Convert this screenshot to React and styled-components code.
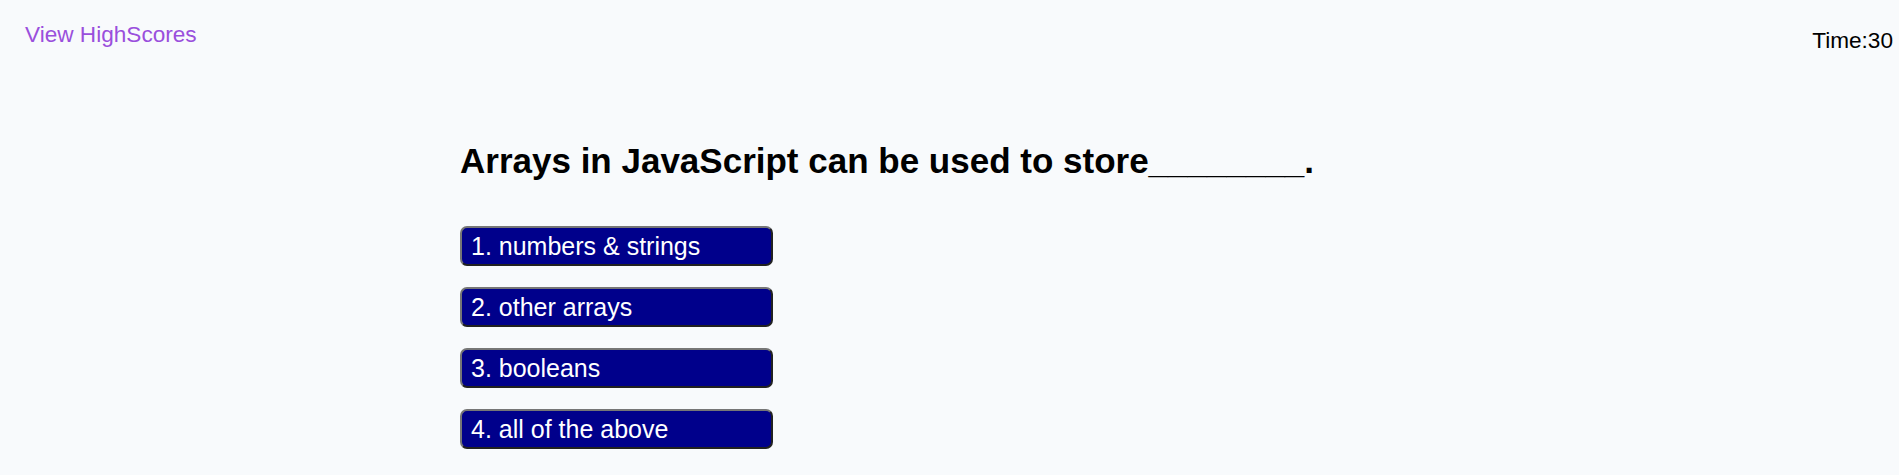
import styled, { createGlobalStyle } from "styled-components";

const GlobalStyle = createGlobalStyle`
    body {
        margin: 0;
        background-color: #f8fafc;
        font-family: "Liberation Sans", Arial, sans-serif;
    }
`;

const choices = [
    "1. numbers & strings",
    "2. other arrays",
    "3. booleans",
    "4. all of the above",
];

const App = () => {
    return (
        <>
            <GlobalStyle />
            <Header>
                <HighScoresLink href="#">View HighScores</HighScoresLink>
                <Timer>Time:30</Timer>
            </Header>
            <Quiz>
                <Question>Arrays in JavaScript can be used to store________.</Question>
                <Choices>
                    {choices.map((choice) => (
                        <ChoiceButton key={choice}>{choice}</ChoiceButton>
                    ))}
                </Choices>
            </Quiz>
        </>
    );
};

const Header = styled.header`
    display: flex;
    justify-content: space-between;
    align-items: flex-start;
    padding: 0 6px 0 25px;
`;

const HighScoresLink = styled.a`
    margin-top: 22px;
    font-size: 22.6px;
    color: #9a4fdc;
    text-decoration: none;
`;

const Timer = styled.div`
    margin-top: 28px;
    font-size: 22.6px;
    color: #000;
`;

const Quiz = styled.main`
    padding-left: 460px;
    margin-top: 87px;
`;

const Question = styled.h1`
    margin: 0 0 45px;
    font-size: 35px;
    font-weight: bold;
    color: #000;
`;

const Choices = styled.div`
    display: flex;
    flex-direction: column;
    align-items: flex-start;
    gap: 21px;
`;

const ChoiceButton = styled.button`
    width: 313px;
    height: 40px;
    padding: 0 9px;
    text-align: left;
    font-family: "Liberation Sans", Arial, sans-serif;
    font-size: 25px;
    color: #fff;
    background-color: #00008b;
    border: 2px outset #767676;
    border-radius: 7px;
    cursor: pointer;
`;

export default App;
